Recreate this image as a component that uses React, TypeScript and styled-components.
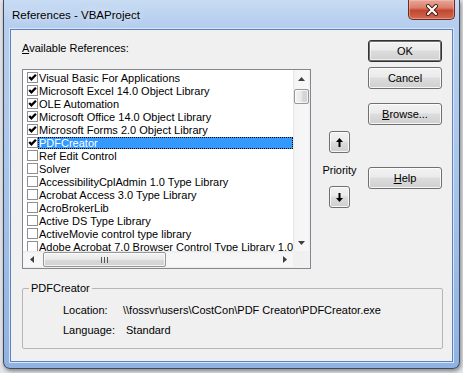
import React from "react";
import styled, { createGlobalStyle } from "styled-components";

const GlobalStyle = createGlobalStyle`
  html, body {
    margin: 0;
    padding: 0;
  }
  body {
    width: 463px;
    height: 373px;
    overflow: hidden;
    background: #e4e6e9;
    font-family: "Liberation Sans", Arial, sans-serif;
    color: #000;
  }
`;

type Reference = {
  name: string;
  checked: boolean;
  selected?: boolean;
};

const references: Reference[] = [
  { name: "Visual Basic For Applications", checked: true },
  { name: "Microsoft Excel 14.0 Object Library", checked: true },
  { name: "OLE Automation", checked: true },
  { name: "Microsoft Office 14.0 Object Library", checked: true },
  { name: "Microsoft Forms 2.0 Object Library", checked: true },
  { name: "PDFCreator", checked: true, selected: true },
  { name: "Ref Edit Control", checked: false },
  { name: "Solver", checked: false },
  { name: "AccessibilityCplAdmin 1.0 Type Library", checked: false },
  { name: "Acrobat Access 3.0 Type Library", checked: false },
  { name: "AcroBrokerLib", checked: false },
  { name: "Active DS Type Library", checked: false },
  { name: "ActiveMovie control type library", checked: false },
  { name: "Adobe Acrobat 7.0 Browser Control Type Library 1.0", checked: false },
];

const App = () => {
  return (
    <>
      <GlobalStyle />
      <Window>
        <TitleBar>
          <TitleText>References - VBAProject</TitleText>
          <CloseButton>
            <svg width="14" height="12" viewBox="0 0 14 12">
              <path d="M3 2 L11 10 M11 2 L3 10" stroke="#4a1810" strokeWidth="4" strokeLinecap="round" />
              <path d="M3 2 L11 10 M11 2 L3 10" stroke="#ffffff" strokeWidth="2.2" strokeLinecap="round" />
            </svg>
          </CloseButton>
        </TitleBar>

        <Client>
          <TopSection>
            <LeftColumn>
              <DialogLabel>
                <Mn>A</Mn>vailable References:
              </DialogLabel>

              <ListBox>
                <Rows>
                  {references.map((ref) => (
                    <Row key={ref.name}>
                      <CheckBox>
                        {ref.checked && (
                          <svg width="9" height="9" viewBox="0 0 9 9">
                            <path d="M1.2 4 L3.4 6.3 L7.9 1.7" stroke="#000" strokeWidth="2.3" fill="none" />
                          </svg>
                        )}
                      </CheckBox>
                      <RowText $selected={ref.selected}>{ref.name}</RowText>
                    </Row>
                  ))}
                </Rows>

                <VScroll>
                  <ArrowCell>
                    <svg width="7" height="4" viewBox="0 0 7 4">
                      <path d="M0 4 L3.5 0 L7 4 Z" fill="#404040" />
                    </svg>
                  </ArrowCell>
                  <VThumb />
                  <TrackFill />
                  <ArrowCell>
                    <svg width="7" height="4" viewBox="0 0 7 4">
                      <path d="M0 0 L3.5 4 L7 0 Z" fill="#404040" />
                    </svg>
                  </ArrowCell>
                </VScroll>

                <HScroll>
                  <ArrowCell>
                    <svg width="4" height="7" viewBox="0 0 4 7">
                      <path d="M4 0 L0 3.5 L4 7 Z" fill="#404040" />
                    </svg>
                  </ArrowCell>
                  <HThumb>
                    <svg width="7" height="6" viewBox="0 0 7 6">
                      <path d="M0.5 0 V6 M3.5 0 V6 M6.5 0 V6" stroke="#555" strokeWidth="1" />
                    </svg>
                  </HThumb>
                  <TrackFill />
                  <ArrowCell>
                    <svg width="4" height="7" viewBox="0 0 4 7">
                      <path d="M0 0 L4 3.5 L0 7 Z" fill="#404040" />
                    </svg>
                  </ArrowCell>
                </HScroll>

                <ScrollCorner />
              </ListBox>
            </LeftColumn>

            <PriorityColumn>
              <SmallButton>
                <svg width="7" height="9" viewBox="0 0 7 9">
                  <path d="M3.5 0 L7 4 L4.5 4 L4.5 9 L2.5 9 L2.5 4 L0 4 Z" fill="#000" />
                </svg>
              </SmallButton>
              <PriorityText>Priority</PriorityText>
              <SmallButton>
                <svg width="7" height="9" viewBox="0 0 7 9">
                  <path d="M3.5 9 L7 5 L4.5 5 L4.5 0 L2.5 0 L2.5 5 L0 5 Z" fill="#000" />
                </svg>
              </SmallButton>
            </PriorityColumn>

            <ButtonColumn>
              <PushButton $default $top={0}>OK</PushButton>
              <PushButton $top={5}>Cancel</PushButton>
              <PushButton $top={14}>
                <Mn>B</Mn>rowse...
              </PushButton>
              <PushButton $top={42}>
                <Mn>H</Mn>elp
              </PushButton>
            </ButtonColumn>
          </TopSection>

          <GroupBox>
            <GroupTitle>PDFCreator</GroupTitle>
            <InfoGrid>
              <InfoLabel>Location:</InfoLabel>
              <InfoValue $indent={0}>{"\\\\fossvr\\users\\CostCon\\PDF Creator\\PDFCreator.exe"}</InfoValue>
              <InfoLabel>Language:</InfoLabel>
              <InfoValue $indent={3}>Standard</InfoValue>
            </InfoGrid>
          </GroupBox>
        </Client>
      </Window>
    </>
  );
};

const Window = styled.div`
  margin-left: 3px;
  width: 457px;
  height: 369px;
  box-sizing: border-box;
  border: 1px solid #3f4c60;
  border-top: none;
  border-radius: 0 0 7px 7px;
  padding: 0 6px 6px 6px;
  display: flex;
  flex-direction: column;
  background: linear-gradient(180deg, #c8dcf3 0px, #b6cfee 22px, #a9c5ea 45%, #8fb2e2 100%);
  box-shadow: 1px 2px 4px rgba(0, 0, 0, 0.45);
`;

const TitleBar = styled.div`
  height: 29px;
  display: flex;
  justify-content: space-between;
  align-items: flex-start;
  flex-shrink: 0;
`;

const TitleText = styled.div`
  padding: 7px 0 0 2px;
  font-size: 11.5px;
  line-height: 16px;
  text-shadow: 0 0 8px rgba(255, 255, 255, 0.9);
`;

const CloseButton = styled.div`
  width: 47px;
  height: 20px;
  margin-right: -2px;
  box-sizing: border-box;
  border: 1px solid #6e2a1f;
  border-top: none;
  border-radius: 0 0 5px 5px;
  background: linear-gradient(180deg, #e8a797 0%, #d9806d 40%, #c4472f 55%, #cf6a52 100%);
  box-shadow: inset 0 0 0 1px rgba(255, 200, 190, 0.45);
  display: flex;
  justify-content: center;
  align-items: center;
`;

const Client = styled.div`
  flex: 1;
  box-sizing: border-box;
  border: 1px solid #5a82c0;
  box-shadow: 0 0 0 1px #d8e6f7;
  background: #f0f0f0;
  padding: 10px 10px 0 11px;
  display: flex;
  flex-direction: column;
  font-size: 11px;
`;

const TopSection = styled.div`
  display: flex;
  flex-direction: row;
  align-items: flex-start;
`;

const LeftColumn = styled.div`
  width: 289px;
  display: flex;
  flex-direction: column;
`;

const DialogLabel = styled.div`
  line-height: 16px;
  height: 16px;
`;

const Mn = styled.span`
  text-decoration: underline;
  text-underline-offset: 1px;
`;

const ListBox = styled.div`
  margin-top: 13px;
  width: 289px;
  height: 200px;
  box-sizing: border-box;
  border: 1px solid #828790;
  background: #fff;
  display: grid;
  grid-template-columns: 1fr 17px;
  grid-template-rows: 1fr 17px;
  overflow: hidden;
`;

const Rows = styled.div`
  padding-top: 1px;
  overflow: hidden;
  min-width: 0;
`;

const Row = styled.div`
  display: flex;
  align-items: center;
  height: 13px;
  white-space: nowrap;
`;

const CheckBox = styled.div`
  width: 11px;
  height: 11px;
  flex-shrink: 0;
  box-sizing: border-box;
  margin-left: 4px;
  border: 1px solid #8f8f8f;
  background: #fff;
  display: flex;
  align-items: center;
  justify-content: center;
`;

type RowTextProps = {
  $selected?: boolean;
};

const RowText = styled.span<RowTextProps>`
  flex: ${(p) => (p.$selected ? "1" : "0 0 auto")};
  height: 12px;
  line-height: 12px;
  padding-left: 1px;
  font-size: 11px;
  background: ${(p) => (p.$selected ? "#3399ff" : "transparent")};
  color: ${(p) => (p.$selected ? "#fff" : "#000")};
  outline: ${(p) => (p.$selected ? "1px dotted #000" : "none")};
  outline-offset: -1px;
`;

const VScroll = styled.div`
  display: flex;
  flex-direction: column;
  align-items: center;
  background: linear-gradient(90deg, #e6e6e6 0px, #f5f5f5 2px, #f7f7f7 15px, #ececec 17px);
`;

const HScroll = styled.div`
  display: flex;
  flex-direction: row;
  align-items: center;
  background: linear-gradient(180deg, #e6e6e6 0px, #f5f5f5 2px, #f7f7f7 15px, #ececec 17px);
`;

const ArrowCell = styled.div`
  width: 17px;
  height: 17px;
  flex-shrink: 0;
  display: flex;
  align-items: center;
  justify-content: center;
`;

const TrackFill = styled.div`
  flex: 1;
`;

const VThumb = styled.div`
  width: 15px;
  height: 15px;
  margin-top: 2px;
  box-sizing: border-box;
  border: 1px solid #979797;
  border-radius: 2px;
  background: linear-gradient(90deg, #f4f4f4 0%, #e8e8e8 50%, #d9d9d9 51%, #d2d2d2 100%);
  box-shadow: inset 0 0 0 1px rgba(255, 255, 255, 0.7);
`;

const HThumb = styled.div`
  width: 123px;
  height: 15px;
  margin-left: 3px;
  box-sizing: border-box;
  border: 1px solid #979797;
  border-radius: 2px;
  background: linear-gradient(180deg, #f4f4f4 0%, #e8e8e8 50%, #d9d9d9 51%, #d2d2d2 100%);
  box-shadow: inset 0 0 0 1px rgba(255, 255, 255, 0.7);
  display: flex;
  align-items: center;
  justify-content: center;
`;

const ScrollCorner = styled.div`
  background: #f0f0f0;
`;

const PriorityColumn = styled.div`
  width: 57px;
  padding-top: 91px;
  display: flex;
  flex-direction: column;
  align-items: center;
`;

const buttonFace = `
  box-sizing: border-box;
  border-radius: 3px;
  background: linear-gradient(180deg, #f2f2f2 0%, #ebebeb 45%, #dddddd 50%, #cfcfcf 100%);
  font-family: "Liberation Sans", Arial, sans-serif;
  font-size: 11px;
  color: #000;
  padding: 0;
  display: flex;
  align-items: center;
  justify-content: center;
`;

const SmallButton = styled.div`
  ${buttonFace}
  width: 21px;
  height: 22px;
  border: 1px solid #707070;
  box-shadow: inset 0 0 0 1px rgba(255, 255, 255, 0.8);
`;

const PriorityText = styled.div`
  margin: 9px 0 8px 0;
  line-height: 16px;
  height: 16px;
`;

const ButtonColumn = styled.div`
  width: 74px;
  display: flex;
  flex-direction: column;
`;

type PushButtonProps = {
  $default?: boolean;
  $top: number;
};

const PushButton = styled.div<PushButtonProps>`
  ${buttonFace}
  width: 74px;
  height: 22px;
  margin-top: ${(p) => p.$top}px;
  border: 1px solid ${(p) => (p.$default ? "#333333" : "#707070")};
  box-shadow: ${(p) =>
    p.$default
      ? "inset 0 0 0 1px #6f6f6f, inset 0 0 0 2px rgba(255,255,255,0.6)"
      : "inset 0 0 0 1px rgba(255,255,255,0.8)"};
`;

const GroupBox = styled.fieldset`
  margin: 12px -1px 0 0;
  padding: 0;
  min-inline-size: auto;
  border: 1px solid #b5b5b5;
  border-radius: 2px;
`;

const GroupTitle = styled.legend`
  margin-left: 6px;
  padding: 0 2px;
  font-size: 11px;
  line-height: 14px;
`;

const InfoGrid = styled.div`
  display: grid;
  grid-template-columns: 60px 1fr;
  grid-auto-rows: 20px;
  align-items: center;
  padding: 5px 0 8px 40px;
`;

const InfoLabel = styled.div`
  white-space: nowrap;
`;

type InfoValueProps = {
  $indent: number;
};

const InfoValue = styled.div<InfoValueProps>`
  padding-left: ${(p) => p.$indent}px;
  white-space: nowrap;
`;

export default App;
